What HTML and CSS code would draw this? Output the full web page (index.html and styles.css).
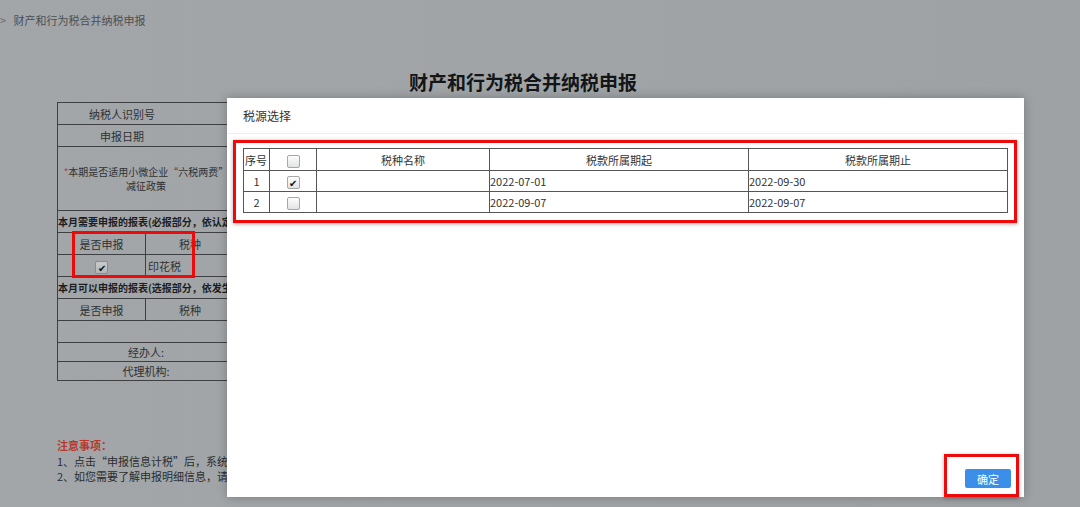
FILE: index.html
```html
<!DOCTYPE html>
<html lang="zh-CN">
<head>
    <meta charset="UTF-8">
    <title>财产和行为税合并纳税申报</title>
    <link rel="stylesheet" href="styles.css">
</head>
<body>

<div class="crumb"><span class="arrow">&gt;</span> 财产和行为税合并纳税申报</div>

<div class="page">
    <h1 class="title">财产和行为税合并纳税申报</h1>

    <table class="form-table">
        <colgroup>
            <col style="width:88px">
            <col style="width:612px">
        </colgroup>
        <tr><td colspan="2"><span class="vis w128">纳税人识别号</span></td></tr>
        <tr><td colspan="2"><span class="vis w128">申报日期</span></td></tr>
        <tr class="tall"><td colspan="2"><span class="vis w176"><span class="star">*</span>本期是否适用小微企业“六税两费”<br>减征政策</span></td></tr>
        <tr><td colspan="2" class="section">本月需要申报的报表(必报部分，依认定)</td></tr>
        <tr><td>是否申报</td><td><span class="vis w88">税种</span></td></tr>
        <tr><td><span class="box checked">&#10004;</span></td><td class="left">印花税</td></tr>
        <tr><td colspan="2" class="section">本月可以申报的报表(选报部分，依发生)</td></tr>
        <tr><td>是否申报</td><td><span class="vis w88">税种</span></td></tr>
        <tr><td colspan="2">&nbsp;</td></tr>
        <tr class="short"><td colspan="2"><span class="vis w176">经办人:</span></td></tr>
        <tr class="short"><td colspan="2"><span class="vis w176">代理机构:</span></td></tr>
    </table>

    <div class="notes">
        <div class="notes-title">注意事项：</div>
        <div>1、点击“申报信息计税”后，系统会自动计算应纳税额</div>
        <div>2、如您需要了解申报明细信息，请点击相应按钮查看</div>
    </div>
</div>

<!-- annotation on the background form -->
<div class="mark mark-left"></div>

<div class="modal">
    <div class="modal-head">税源选择</div>
    <div class="modal-body">
        <div class="mark-wrap">
            <table class="source-table">
                <colgroup>
                    <col style="width:26px">
                    <col style="width:47px">
                    <col style="width:173px">
                    <col style="width:259px">
                    <col style="width:259px">
                </colgroup>
                <tr>
                    <th>序号</th>
                    <th><span class="box"></span></th>
                    <th>税种名称</th>
                    <th>税款所属期起</th>
                    <th>税款所属期止</th>
                </tr>
                <tr>
                    <td class="mid">1</td>
                    <td class="mid"><span class="box checked">&#10004;</span></td>
                    <td></td>
                    <td>2022-07-01</td>
                    <td>2022-09-30</td>
                </tr>
                <tr>
                    <td class="mid">2</td>
                    <td class="mid"><span class="box"></span></td>
                    <td></td>
                    <td>2022-09-07</td>
                    <td>2022-09-07</td>
                </tr>
            </table>
        </div>
    </div>
    <div class="modal-foot">
        <div class="mark-btn">
            <button type="button" class="ok">确定</button>
        </div>
    </div>
</div>

</body>
</html>
```

FILE: styles.css
```css
body {
    margin: 0;
    height: 507px;
    overflow: hidden;
    background: linear-gradient(90deg, #a2a6a9, #9ea2a5);
    font-family: "Noto Sans CJK SC", "Noto Sans", sans-serif;
    font-size: 11px;
    color: #2f3133;
    position: relative;
}
.crumb {
    height: 40px;
    line-height: 40px;
    font-size: 11px;
    color: #4c4f52;
}
.crumb .arrow {
    margin-right: 5px;
    color: #66696c;
}
.page {
    width: 1046px;
}
.title {
    margin: 0;
    padding-top: 29px;
    height: 33px;
    line-height: 26px;
    text-align: center;
    font-size: 19px;
    font-weight: bold;
    color: #141516;
}
.form-table {
    margin-left: 57px;
    width: 700px;
    border-collapse: collapse;
    table-layout: fixed;
}
.form-table td {
    border: 1px solid #3d3f41;
    height: 21px;
    padding: 0;
    text-align: center;
    color: #2f3133;
}
.vis {
    display: block;
    text-align: center;
    white-space: nowrap;
}
.w88 { width: 88px; }
.w128 { width: 128px; }
.w176 { width: 176px; }
.form-table tr.tall td {
    height: 63px;
    line-height: 14px;
    font-size: 10px;
}
.form-table tr.short td {
    height: 18px;
}
.form-table td.section {
    text-align: left;
    font-size: 10px;
    font-weight: bold;
    color: #1c1d1e;
    border-right: none;
}
.form-table td.left {
    text-align: left;
    padding-left: 2px;
}
.star {
    color: #a8443c;
}
.box {
    display: inline-block;
    width: 11px;
    height: 11px;
    border: 1px solid #a5a7a9;
    border-radius: 2px;
    background: linear-gradient(#fdfdfd, #e2e3e4);
    vertical-align: middle;
    font-size: 10px;
    line-height: 11px;
    text-align: center;
    color: #111;
}
.form-table .box {
    border-color: #8a8c8e;
    background: linear-gradient(#c8cacc, #b4b6b8);
}
.notes {
    margin: 57px 0 0 57px;
    font-size: 11px;
    line-height: 15.5px;
    color: #2b2d2f;
}
.notes-title {
    color: #b7392c;
    font-weight: bold;
}
.mark {
    position: absolute;
    border: 3px solid #ee0a0a;
}
.mark-left {
    left: 72px;
    top: 231px;
    width: 117px;
    height: 41px;
}
.modal {
    position: absolute;
    left: 227px;
    top: 98px;
    width: 797px;
    height: 399px;
    background: #fff;
    box-shadow: 0 0 10px rgba(0, 0, 0, 0.25);
    display: flex;
    flex-direction: column;
}
.modal-head {
    height: 35px;
    line-height: 35px;
    padding-left: 16px;
    font-size: 12px;
    color: #333;
    border-bottom: 1px solid #efefef;
}
.modal-body {
    flex: 1;
    padding: 6px 0 0 6px;
}
.mark-wrap {
    width: 764px;
    border: 3px solid #ee0a0a;
    padding: 5px 7px 7px 7px;
    box-shadow: 0 1px 4px rgba(0, 0, 0, 0.35);
}
.source-table {
    width: 764px;
    border-collapse: collapse;
    table-layout: fixed;
    font-size: 11px;
    color: #333;
}
.source-table th,
.source-table td {
    border: 1px solid #555;
    padding: 0;
    height: 20px;
    text-align: left;
    font-weight: normal;
}
.source-table th {
    height: 21px;
    text-align: center;
}
.source-table th:first-child {
    text-align: left;
    padding-left: 1px;
}
.source-table td.mid {
    text-align: center;
}
.modal-foot {
    display: flex;
    justify-content: flex-end;
    padding-right: 5px;
}
.mark-btn {
    border: 3px solid #ee0a0a;
    padding: 12px 5px 6px 18px;
    box-shadow: 0 1px 4px rgba(0, 0, 0, 0.3);
}
.ok {
    display: block;
    width: 46px;
    height: 19px;
    border: none;
    border-radius: 2px;
    background: #3b8fe8;
    color: #fff;
    font-family: "Noto Sans CJK SC", sans-serif;
    font-size: 11px;
    padding: 0;
}
```
